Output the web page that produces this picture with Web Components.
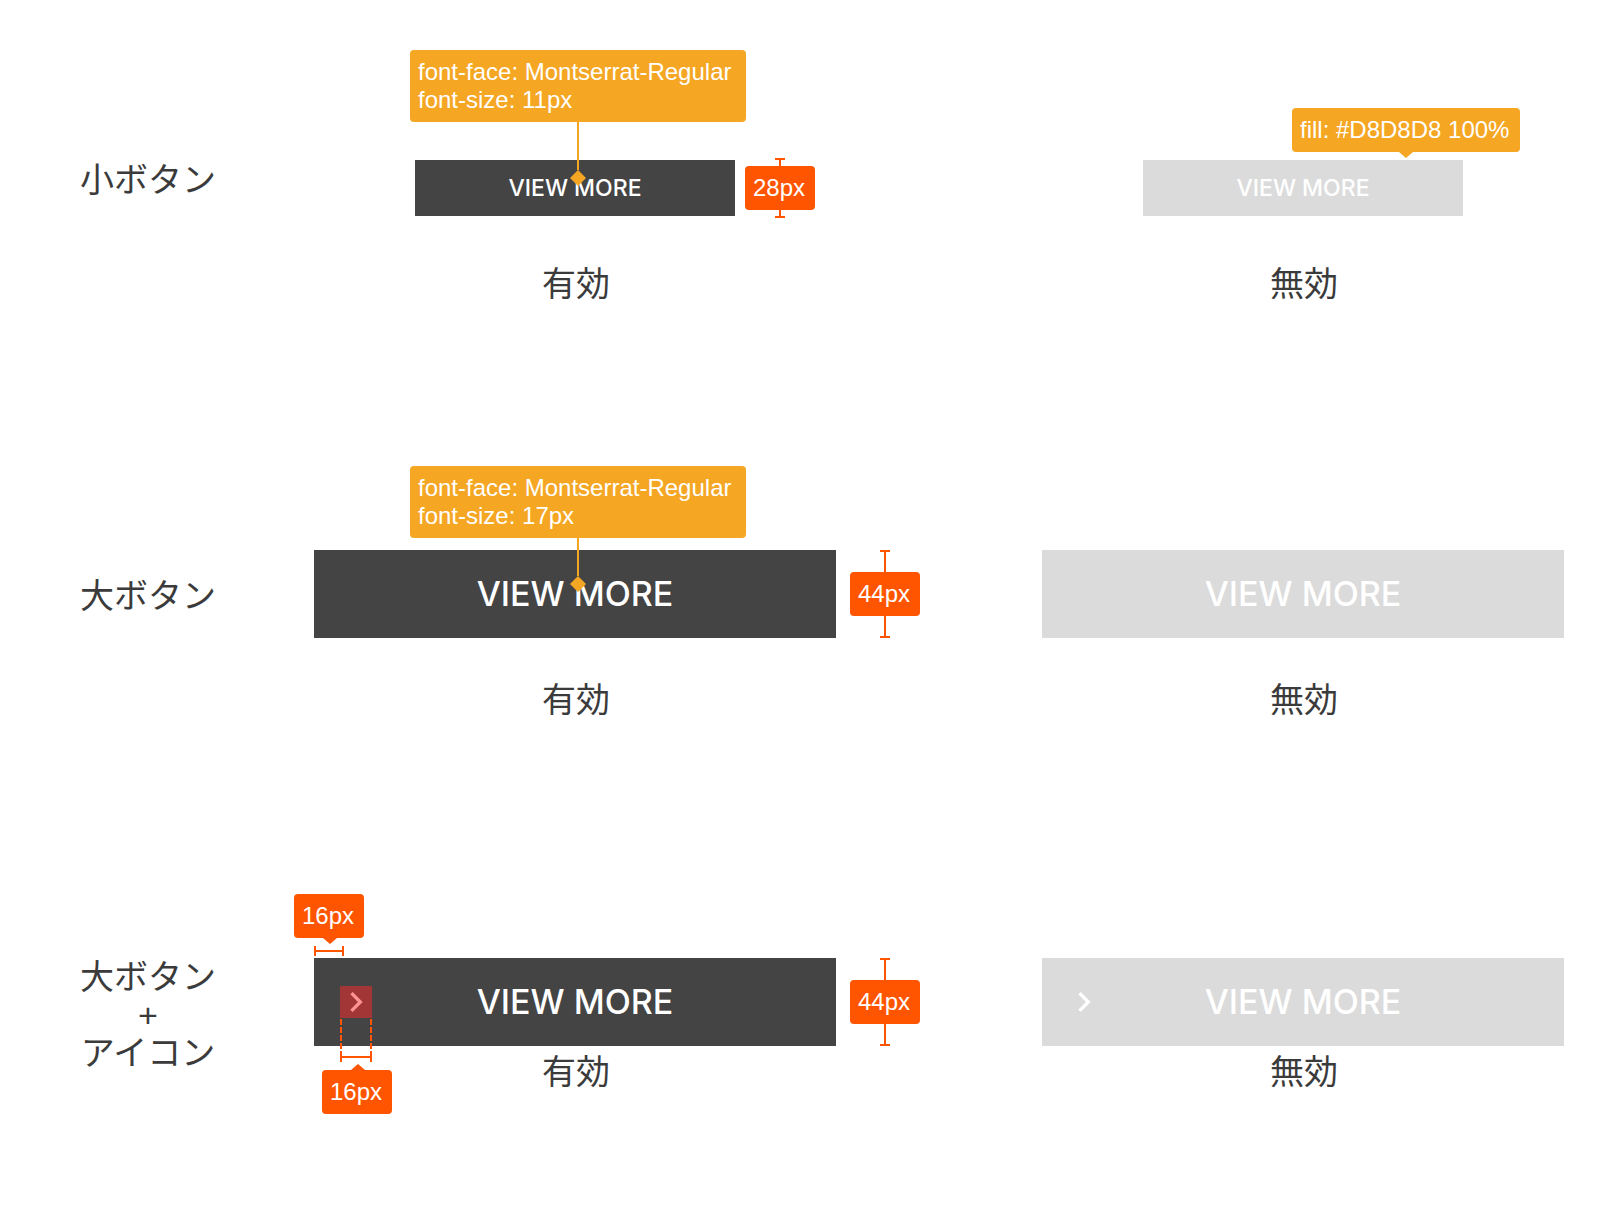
<!DOCTYPE html>
<html lang="ja">
<head>
<meta charset="utf-8">
<title>ボタン</title>
<style>
  body { margin: 0; background: #fff; color: #3b3b3b; font-family: "Liberation Sans", "Noto Sans CJK JP", sans-serif; }
</style>
</head>
<body>
<spec-sheet>
  <spec-row>
    <span slot="label">小ボタン</span>
    <spec-state caption="有効">
      <view-button size="small">VIEW MORE
        <font-note slot="note">font-face: Montserrat-Regular<br>font-size: 11px</font-note>
        <height-mark slot="note">28px</height-mark>
      </view-button>
    </spec-state>
    <spec-state caption="無効">
      <view-button size="small" disabled>VIEW MORE
        <fill-note slot="note">fill: #D8D8D8 100%</fill-note>
      </view-button>
    </spec-state>
  </spec-row>
  <spec-row class="large">
    <span slot="label">大ボタン</span>
    <spec-state caption="有効">
      <view-button size="large">VIEW MORE
        <font-note slot="note">font-face: Montserrat-Regular<br>font-size: 17px</font-note>
        <height-mark slot="note">44px</height-mark>
      </view-button>
    </spec-state>
    <spec-state caption="無効">
      <view-button size="large" disabled>VIEW MORE</view-button>
    </spec-state>
  </spec-row>
  <spec-row class="icon">
    <span slot="label">大ボタン<br>+<br>アイコン</span>
    <spec-state caption="有効">
      <view-button size="large" icon>VIEW MORE
        <inset-mark slot="note">16px</inset-mark>
        <icon-mark slot="note">16px</icon-mark>
        <height-mark slot="note">44px</height-mark>
      </view-button>
    </spec-state>
    <spec-state caption="無効">
      <view-button size="large" icon disabled>VIEW MORE</view-button>
    </spec-state>
  </spec-row>
</spec-sheet>

<script>
const define = (name, html) => {
  const template = document.createElement('template');
  template.innerHTML = html;
  customElements.define(name, class extends HTMLElement {
    constructor() {
      super();
      this.attachShadow({ mode: 'open' }).append(template.content.cloneNode(true));
    }
    connectedCallback() {
      const caption = this.shadowRoot.querySelector('figcaption');
      if (caption) caption.textContent = this.getAttribute('caption');
      const button = this.shadowRoot.querySelector('button');
      if (button) button.disabled = this.hasAttribute('disabled');
    }
  });
};

define('spec-sheet', `
  <style>
    :host { display: block; }
    main { display: flex; flex-direction: column; padding: 160px 16px 128px 0; }
    ::slotted(.large) { margin-top: 242px; --label-top: 27px; --caption-gap: 38px; }
    ::slotted(.icon) { margin-top: 234px; --label-top: 0px; --caption-gap: 2px; }
  </style>
  <main><slot></slot></main>`);

define('spec-row', `
  <style>
    :host { display: flex; align-items: flex-start; }
    .label { flex: 0 0 294px; box-sizing: border-box; padding: var(--label-top, 1px) 0 0 2px; font-size: 34px; line-height: 38px; text-align: center; }
    .states { flex: 1; display: grid; grid-template-columns: 1fr 1fr; column-gap: 166px; }
  </style>
  <div class="label"><slot name="label"></slot></div>
  <div class="states"><slot></slot></div>`);

define('spec-state', `
  <style>
    :host { display: block; min-width: 0; }
    figure { margin: 0; display: flex; flex-direction: column; align-items: center; gap: var(--caption-gap, 44px); }
    figcaption { font-size: 34px; line-height: 48px; padding-left: 2px; }
  </style>
  <figure><slot></slot><figcaption></figcaption></figure>`);

define('view-button', `
  <style>
    :host { display: block; position: relative; width: 100%; max-width: 522px; --mark-gap: 14px; --note-gap: 12px; --leader: 38px; --overshoot: 0px; }
    :host([size="small"]) { max-width: 320px; --mark-gap: 10px; --note-gap: 38px; --leader: 48px; --overshoot: 2px; }
    button { display: flex; align-items: center; justify-content: center; position: relative; width: 100%; height: 88px; margin: 0; padding: 0; border: 0; border-radius: 0; background: #444; color: #fff; font: 500 34px/40px Inter, "Liberation Sans", sans-serif; }
    :host([size="small"]) button { height: 56px; font-size: 23px; line-height: 28px; }
    button:disabled { background: #dbdbdb; }
    svg { display: none; position: absolute; left: 22px; top: 24px; width: 40px; height: 40px; fill: #fff; }
    :host([icon]) svg { display: block; }
  </style>
  <button type="button">
    <svg viewBox="0 0 24 24" aria-hidden="true"><path d="M10 6 8.59 7.41 13.17 12l-4.58 4.59L10 18l6-6z"/></svg>
    <span><slot></slot></span>
  </button>
  <slot name="note"></slot>`);

const tag = `
  .tag { position: relative; box-sizing: border-box; width: max-content; min-width: 70px; padding: 8px; border-radius: 4px; background: var(--tone); color: #fff; font-size: 24px; line-height: 28px; }
  .down::after, .up::after { content: ""; position: absolute; left: var(--tip, 50%); margin-left: -7px; border: 7px solid transparent; }
  .down::after { top: 100%; border-top: 6px solid var(--tone); border-bottom: 0; }
  .up::after { bottom: 100%; border-bottom: 6px solid var(--tone); border-top: 0; }`;

define('font-note', `
  <style>${tag}
    :host { --tone: #f5a623; position: absolute; left: 50%; bottom: calc(100% + var(--note-gap)); transform: translateX(-50%); margin-left: 3px; display: flex; flex-direction: column; align-items: center; }
    .tag { min-width: 336px; }
    .leader { position: absolute; top: 100%; width: 2px; height: var(--leader); background: var(--tone); }
    .leader::after { content: ""; position: absolute; left: -7px; top: 100%; width: 16px; height: 16px; background: var(--tone); clip-path: polygon(50% 0, 100% 50%, 50% 100%, 0 50%); }
  </style>
  <div class="tag"><slot></slot></div><div class="leader"></div>`);

define('fill-note', `
  <style>${tag}
    :host { --tone: #f5a623; --tip: 50%; position: absolute; right: -57px; bottom: calc(100% + 8px); }
    .tag { min-width: 228px; }
  </style>
  <div class="tag down"><slot></slot></div>`);

define('height-mark', `
  <style>${tag}
    :host { --tone: #ff5500; position: absolute; left: calc(100% + var(--mark-gap)); top: calc(0px - var(--overshoot)); bottom: calc(0px - var(--overshoot)); display: flex; align-items: center; justify-content: center; }
    .bar { position: absolute; top: 0; bottom: 0; left: 30px; width: 10px; box-sizing: border-box; border: solid var(--tone); border-width: 2px 0; background: linear-gradient(var(--tone), var(--tone)) center / 2px 100% no-repeat; }
  </style>
  <div class="bar"></div><div class="tag"><slot></slot></div>`);

const bracket = `
  .bracket { box-sizing: border-box; height: 10px; border: solid var(--tone); border-width: 0 2px; background: linear-gradient(var(--tone), var(--tone)) 0 4px / 100% 2px no-repeat; }`;

define('inset-mark', `
  <style>${tag}${bracket}
    :host { --tone: #ff5500; --tip: 36px; position: absolute; left: -20px; bottom: calc(100% + 2px); display: flex; flex-direction: column; gap: 8px; }
    .bracket { width: 30px; margin-left: 20px; }
  </style>
  <div class="tag down"><slot></slot></div><div class="bracket"></div>`);

define('icon-mark', `
  <style>${tag}${bracket}
    :host { --tone: #ff5500; --tip: 36px; position: absolute; left: 8px; top: 28px; display: flex; flex-direction: column; }
    .area, .guides, .bracket { width: 32px; margin-left: 18px; }
    .area { height: 32px; background: rgba(255, 40, 40, .5); }
    .guides { height: 34px; --dash: repeating-linear-gradient(transparent 0 1px, var(--tone) 1px 7px, transparent 7px 8px); background: var(--dash) left / 2px 100% no-repeat, var(--dash) right / 2px 100% no-repeat; }
    .bracket { margin-bottom: 8px; }
  </style>
  <div class="area"></div><div class="guides"></div><div class="bracket"></div>
  <div class="tag up"><slot></slot></div>`);
</script>
</body>
</html>
